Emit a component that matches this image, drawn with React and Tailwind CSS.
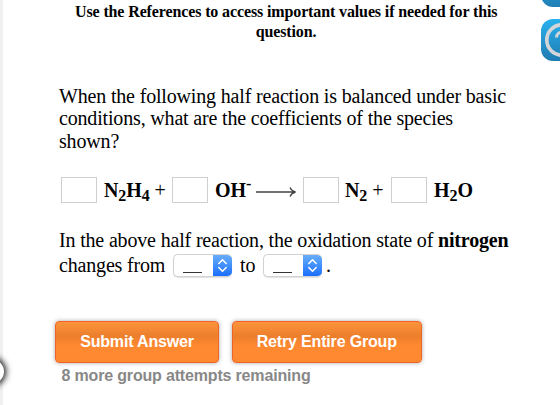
import React from 'react';

function Blank() {
  return (
    <input
      aria-label="coefficient"
      className="h-[26px] w-[36px] shrink-0 border border-[#cfcfcf] bg-white text-center outline-none"
    />
  );
}

function Picker() {
  return (
    <button className="flex h-[23px] w-[59px] shrink-0 overflow-hidden rounded-[5px] border border-r-0 border-[#d2d2d2] bg-white shadow-[0_1px_1px_rgba(0,0,0,0.12)]">
      <span className="mt-[17px] ml-[9px] h-px w-[19px] bg-[#333]"></span>
      <span className="-my-px ml-auto flex h-[23px] w-[19px] items-center justify-center bg-gradient-to-b from-[#6bb0fb] to-[#156afb]">
        <svg width="11" height="15" viewBox="0 0 11 15" fill="none" stroke="#fff" strokeWidth="1.5" strokeLinecap="round" strokeLinejoin="round">
          <path d="M1.8 5.5 5.5 1.7 9.2 5.5M1.8 9.5 5.5 13.3 9.2 9.5" />
        </svg>
      </span>
    </button>
  );
}

function ActionButton({ className, children }) {
  return (
    <button className={`h-[42px] shrink-0 rounded-[4px] border border-[#ee6428] bg-gradient-to-b from-[#fd933c] from-0% via-[#ec7e2b] via-35% to-[#ff8931] to-60% pb-px text-[16px] font-bold tracking-[-0.17px] whitespace-nowrap text-white shadow-[0_0_4px_rgba(0,0,0,0.35)] ${className}`}>
      {children}
    </button>
  );
}

export default function App() {
  return (
    <div className="relative flex h-[405px] w-[560px] overflow-hidden bg-white font-['Liberation_Serif',serif] text-black">
      <div className="w-[3px] shrink-0 bg-[#f0f0f0]"></div>

      {/* drawer handle on the left edge */}
      <div className="absolute top-[359px] -left-[21px] size-[25px] rounded-full bg-white shadow-[0_0_6px_2px_rgba(0,0,0,0.9)]"></div>

      {/* side tools */}
      <div className="absolute -top-[35px] left-[541px] size-[42px] rounded-[12px] bg-gradient-to-b from-[#29b1ec] to-[#217fb5]"></div>
      <div className="absolute top-[19px] left-[541px] size-[42px] rounded-[12px] bg-gradient-to-b from-[#28b2ee] to-[#207bb2]">
        <svg width="42" height="42" viewBox="0 0 42 42" fill="none" stroke="#d3d5d8">
          <circle cx="21" cy="21" r="15.2" strokeWidth="3.6" />
          <path d="M15.5 18.5c0-7 11-7 11-1 0 4-6 4-6 8" strokeWidth="3" />
          <circle cx="21" cy="29" r="1" strokeWidth="2" />
        </svg>
      </div>

      <div className="grow">
        <h1 className="ml-[72px] w-[422px] pt-[2px] text-center text-[16px] leading-[19.5px] font-bold tracking-[-0.126px] whitespace-nowrap">
          <span className="block">Use the References to access important values if needed for this</span>
          <span className="block">question.</span>
        </h1>

        <div className="ml-[56px] pt-[44px] text-[20px] leading-[22.3px] whitespace-nowrap">
          <p className="tracking-[-0.17px]">
            When the following half reaction is balanced under basic<br />
            conditions, what are the coefficients of the species<br />
            shown?
          </p>

          <div className="mt-[25px] ml-[2px] flex h-[26px] items-center tracking-[-0.1px]">
            <Blank />
            <span className="ml-[7px] w-[68px]"><b>N<sub className="text-[16px]">2</sub>H<sub className="text-[16px]">4</sub></b> +</span>
            <Blank />
            <span className="ml-[7px] w-[37px]"><b>OH<sup className="text-[16px]">-</sup></b></span>
            <svg className="mt-[4px] ml-[4px] shrink-0" width="41" height="12" viewBox="0 0 41 12" fill="none" stroke="#444" strokeWidth="1.3">
              <path d="M0 6H39M34 1.5Q35.5 5 39.5 6 35.5 7 34 10.5" />
            </svg>
            <span className="w-[6px]"></span>
            <Blank />
            <span className="ml-[6px] w-[46px]"><b>N<sub className="text-[16px]">2</sub></b> +</span>
            <Blank />
            <b className="ml-[7px]">H<sub className="text-[16px]">2</sub>O</b>
          </div>

          <p className="mt-[26px] tracking-[-0.17px]">In the above half reaction, the oxidation state of <b>nitrogen</b></p>
          <div className="mt-px flex h-[26px] items-center tracking-[-0.17px]">
            <span className="w-[114px]">changes from</span>
            <Picker />
            <span className="ml-[8px] w-[23px]">to</span>
            <Picker />
            <span className="ml-[4px]">.</span>
          </div>
        </div>

        <div className="ml-[52px] pt-[43px] font-['Liberation_Sans',sans-serif]">
          <div className="flex gap-[13px]">
            <ActionButton className="w-[164px]">Submit Answer</ActionButton>
            <ActionButton className="w-[189.5px]">Retry Entire Group</ActionButton>
          </div>
          <p className="mt-[3px] ml-[6.5px] text-[16px] leading-[20px] font-bold tracking-[-0.17px] text-[#888]">8 more group attempts remaining</p>
        </div>
      </div>
    </div>
  );
}
